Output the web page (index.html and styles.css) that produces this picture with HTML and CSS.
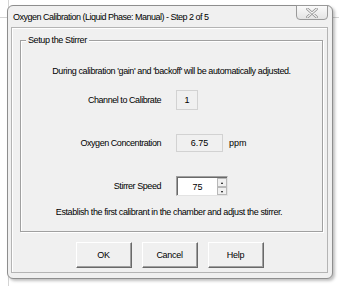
FILE: index.html
```html
<!DOCTYPE html>
<html>
<head>
  <meta charset="UTF-8">
  <title>Oxygen Calibration</title>
  <link rel="stylesheet" href="styles.css">
</head>
<body>

  <!-- 对话框窗口 -->
  <div class="window">
    <div class="titlebar">
      <span class="title">Oxygen Calibration (Liquid Phase: Manual) - Step 2 of 5</span>
      <button class="close" title="Close">
        <svg width="12" height="10" viewBox="0 0 12 10">
          <path d="M1.5 1 L10.5 9 M10.5 1 L1.5 9" stroke="#8a8a8a" stroke-width="2.6" stroke-linecap="round"/>
          <path d="M1.5 1 L10.5 9 M10.5 1 L1.5 9" stroke="#f4f4f4" stroke-width="1.2" stroke-linecap="round"/>
        </svg>
      </button>
    </div>

    <div class="client">
      <div class="group">
        <span class="legend">Setup the Stirrer</span>
        <p class="note first">During calibration 'gain' and 'backoff' will be automatically adjusted.</p>

        <div class="row r1">
          <label>Channel to Calibrate</label>
          <span class="readonly small">1</span>
        </div>
        <div class="row r2">
          <label>Oxygen Concentration</label>
          <span class="readonly wide">6.75</span>
          <span class="unit">ppm</span>
        </div>
        <div class="row r3">
          <label for="speed">Stirrer Speed</label>
          <div class="spin">
            <input id="speed" type="text" value="75">
            <div class="arrows">
              <span class="up"></span>
              <span class="down"></span>
            </div>
          </div>
        </div>

        <p class="note last">Establish the first calibrant in the chamber and adjust the stirrer.</p>
      </div>

      <div class="buttons">
        <button class="btn">OK</button>
        <button class="btn">Cancel</button>
        <button class="btn">Help</button>
      </div>
    </div>
  </div>

</body>
</html>
```

FILE: styles.css
```css
html, body {
  margin: 0;
  padding: 0;
}
body {
  width: 339px;
  height: 286px;
  overflow: hidden;
  font-family: "Liberation Sans", Arial, sans-serif;
  font-size: 9px;
  color: #000;
  background-color: #fff;
  /* 背后表格的网格线 */
  background-image:
    linear-gradient(to right, transparent 8px, #d4d4d4 8px, #d4d4d4 9px, transparent 9px),
    linear-gradient(to bottom, transparent 17px, #d4d4d4 17px, #d4d4d4 18px, transparent 18px);
  padding-top: 5px;
  padding-left: 7px;
  box-sizing: border-box;
}

.window {
  width: 326px;
  height: 274px;
  box-sizing: border-box;
  border: 1px solid #8e8e8e;
  border-radius: 6px;
  background-color: #f0f0f0;
  box-shadow: 2px 2px 3px rgba(0, 0, 0, 0.25);
  display: flex;
  flex-direction: column;
  padding: 0 4px 5px 3px;
}

.titlebar {
  height: 21px;
  display: flex;
  align-items: flex-start;
  justify-content: space-between;
  flex: none;
}
.title {
  font-size: 9px;
  letter-spacing: -0.5px;
  margin: 5px 0 0 2px;
  line-height: 12px;
}
.close {
  width: 32px;
  height: 15px;
  margin-top: -1px;
  padding: 0;
  border: 1px solid #9a9a9a;
  border-radius: 0 0 4px 4px;
  background: linear-gradient(#fafafa, #e4e4e4);
  display: flex;
  align-items: center;
  justify-content: center;
}

.client {
  flex: 1;
  border: 1px solid #b4b4b4;
  box-shadow: inset 1px 1px #fff;
  padding: 12px 0 0 8px;
}

.group {
  position: relative;
  width: 303px;
  height: 192px;
  box-sizing: border-box;
  border: 1px solid #a0a0a0;
  box-shadow: inset 1px 1px #fff, 1px 1px #fff;
  display: flex;
  flex-direction: column;
}
.legend {
  position: absolute;
  left: 5px;
  top: -6px;
  padding: 0 2px;
  background-color: #f0f0f0;
  line-height: 11px;
  letter-spacing: -0.4px;
}

.note {
  margin: 0;
  line-height: 12px;
  text-align: center;
  letter-spacing: -0.4px;
}
.note.first {
  margin-top: 24px;
}
.note.last {
  margin-top: 10px;
  padding-right: 5px;
}

.row {
  display: flex;
  align-items: center;
  height: 20px;
}
.row label {
  width: 140px;
  text-align: right;
  margin-right: 15px;
  letter-spacing: -0.45px;
}
.r1 {
  margin-top: 13px;
}
.r2 {
  margin-top: 23px;
}
.r3 {
  margin-top: 23px;
}

.readonly {
  height: 18px;
  box-sizing: border-box;
  border: 1px solid #d2d2d2;
  background-color: #f0f0f0;
  display: flex;
  align-items: center;
  justify-content: center;
}
.readonly.small {
  width: 22px;
  height: 20px;
}
.readonly.wide {
  width: 47px;
}
.unit {
  margin-left: 6px;
}

.spin {
  width: 52px;
  height: 20px;
  box-sizing: border-box;
  border: 1px solid #a0a0a0;
  border-right-color: #e3e3e3;
  border-bottom-color: #e3e3e3;
  box-shadow: inset 1px 1px #696969;
  background-color: #fff;
  display: flex;
}
.spin input {
  width: 39px;
  border: none;
  padding: 0;
  margin: 1px 0 0 1px;
  background: transparent;
  font: 9px "Liberation Sans", Arial, sans-serif;
  text-align: center;
  outline: none;
}
.arrows {
  width: 10px;
  display: flex;
  flex-direction: column;
  margin: 1px 0 0 0;
}
.arrows span {
  flex: 1;
  box-sizing: border-box;
  border: 1px solid #b8b8b8;
  background-color: #f0f0f0;
  position: relative;
}
.arrows span::after {
  content: "";
  position: absolute;
  left: 3px;
  width: 0;
  height: 0;
  border-left: 1.5px solid transparent;
  border-right: 1.5px solid transparent;
}
.arrows .up::after {
  top: 3px;
  border-bottom: 2px solid #000;
}
.arrows .down::after {
  top: 3px;
  border-top: 2px solid #000;
}

.buttons {
  display: flex;
  justify-content: center;
  gap: 10px;
  margin-top: 10px;
  padding-right: 8px;
}
.btn {
  width: 56px;
  height: 26px;
  box-sizing: border-box;
  padding: 0;
  border: 1px solid;
  border-color: #fff #696969 #696969 #fff;
  box-shadow: inset -1px -1px #a0a0a0;
  background-color: #f0f0f0;
  font: 9px "Liberation Sans", Arial, sans-serif;
  letter-spacing: -0.3px;
  color: #000;
}
```
